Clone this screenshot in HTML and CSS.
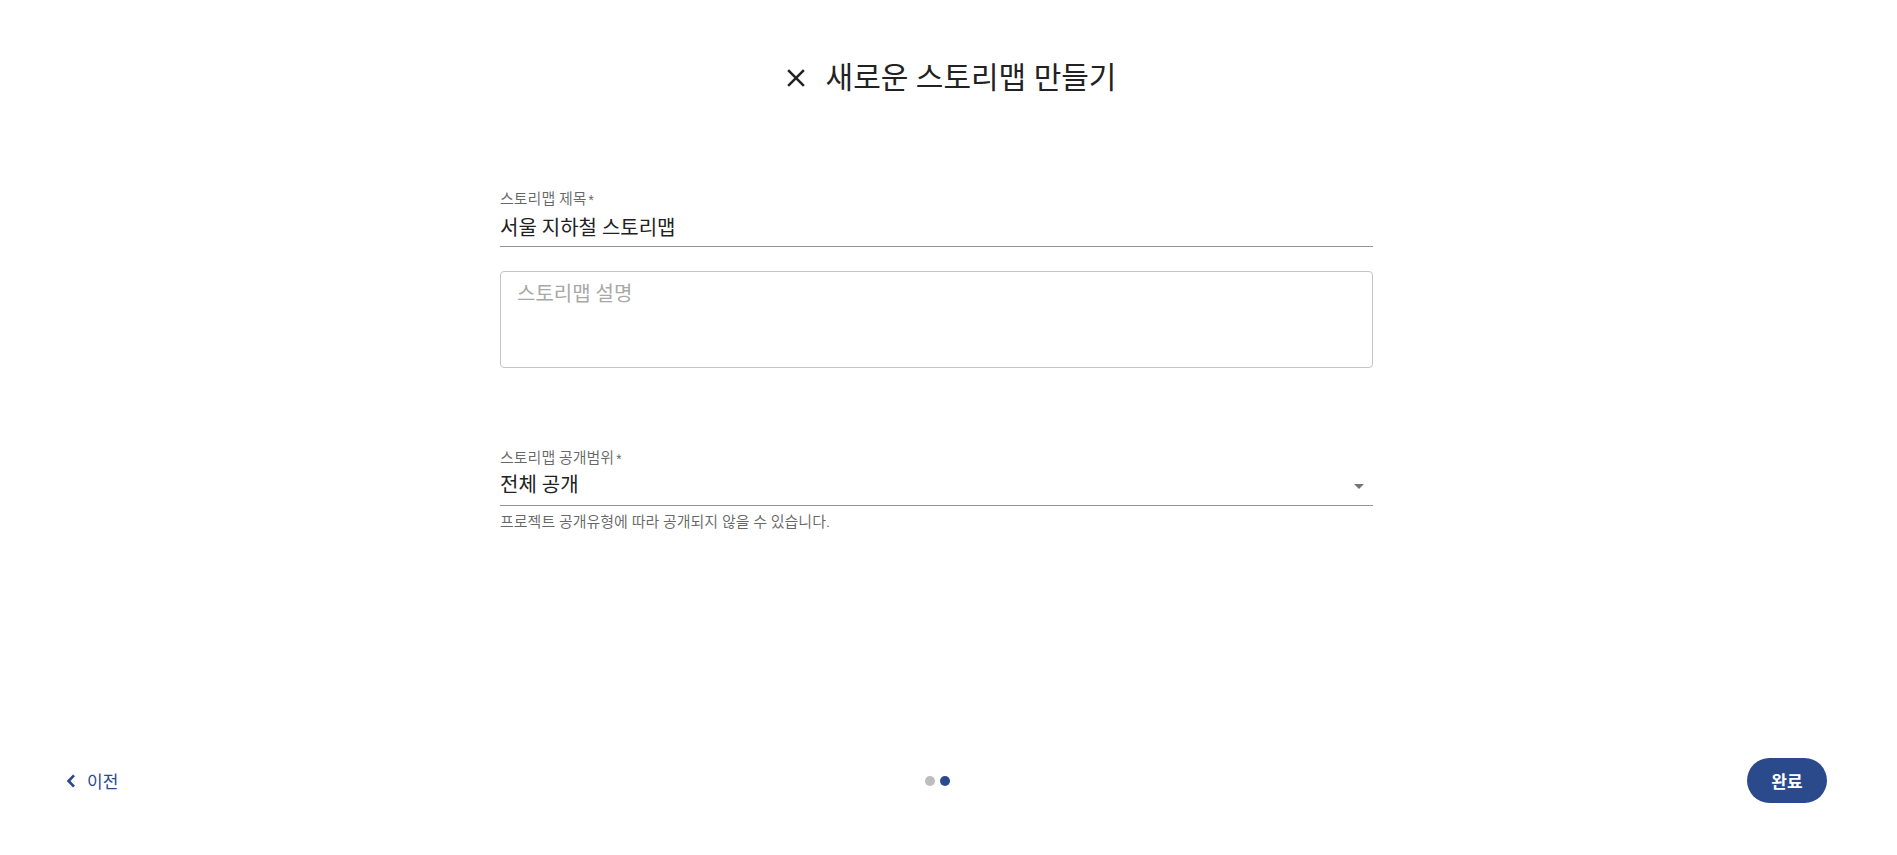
FILE: index.html
```html
<!DOCTYPE html>
<html>

<head>
    <meta name="viewport" content="width=device-width,initial-scale=1.0">
    <title>새로운 스토리맵 만들기</title>
    <link rel="stylesheet" href="styles.css">
</head>

<body>
    <div class="page">
        <header class="dialog-header">
            <button class="close-button" aria-label="닫기">
                <svg viewBox="0 0 24 24" width="30" height="30">
                    <path d="M19 6.41 17.59 5 12 10.59 6.41 5 5 6.41 10.59 12 5 17.59 6.41 19 12 13.41 17.59 19 19 17.59 13.41 12z" fill="currentColor" />
                </svg>
            </button>
            <h1 class="dialog-title">새로운 스토리맵 만들기</h1>
        </header>

        <main class="form-wrap">
            <form class="form">
                <div class="field">
                    <label class="field-label">스토리맵 제목<span class="required">*</span></label>
                    <div class="field-input">서울 지하철 스토리맵</div>
                </div>

                <div class="textarea-box">
                    <div class="placeholder">스토리맵 설명</div>
                </div>

                <div class="field field-select">
                    <label class="field-label">스토리맵 공개범위<span class="required">*</span></label>
                    <div class="field-input select-input">
                        <span class="select-value">전체 공개</span>
                        <svg class="select-arrow" viewBox="0 0 24 24" width="24" height="24">
                            <path d="M7 10l5 5 5-5z" fill="currentColor" />
                        </svg>
                    </div>
                    <p class="helper-text">프로젝트 공개유형에 따라 공개되지 않을 수 있습니다.</p>
                </div>
            </form>
        </main>

        <footer class="stepper">
            <button class="back-button">
                <svg viewBox="0 0 10 14" width="10" height="14">
                    <polyline points="8,1.4 2.6,7 8,12.6" fill="none" stroke="currentColor" stroke-width="2.7" />
                </svg>
                <span>이전</span>
            </button>
            <div class="dots">
                <span class="dot"></span>
                <span class="dot active"></span>
            </div>
            <button class="done-button">완료</button>
        </footer>
    </div>
</body>

</html>
```

FILE: styles.css
```css
body {
    margin: 0;
    padding: 0;
    font-family: Roboto, "Noto Sans CJK KR", sans-serif;
    background: #fff;
    color: #212121;
}

button {
    font-family: inherit;
    background: none;
    border: none;
    cursor: pointer;
    padding: 0;
}

.page {
    display: flex;
    flex-direction: column;
    min-height: 100vh;
}

.dialog-header {
    display: flex;
    justify-content: center;
    align-items: center;
    gap: 15px;
    padding-top: 60px;
}

.close-button {
    display: flex;
    color: #222;
}

.dialog-title {
    margin: 0;
    font-size: 30px;
    font-weight: 400;
    line-height: 36px;
    color: #222;
}

.form-wrap {
    display: flex;
    justify-content: center;
    padding-top: 93px;
}

.form {
    width: 873px;
    margin-right: 24px;
    display: flex;
    flex-direction: column;
}

.field-label {
    display: block;
    font-size: 15px;
    line-height: 20px;
    color: rgba(0, 0, 0, 0.6);
}

.required {
    margin-left: 2px;
    font-size: 12px;
}

.field-input {
    margin-top: 4px;
    font-size: 20px;
    line-height: 28px;
    padding-bottom: 4px;
    border-bottom: 1px solid rgba(0, 0, 0, 0.42);
}

.textarea-box {
    margin-top: 24px;
    border: 1px solid #c4c4c4;
    border-radius: 4px;
    padding: 8px 16px;
    height: 79px;
}

.placeholder {
    font-size: 20px;
    line-height: 28px;
    color: #a8a8a8;
}

.field-select {
    margin-top: 80px;
}

.select-input {
    display: flex;
    align-items: center;
    margin-top: 2px;
    padding-bottom: 6px;
}

.select-value {
    flex-grow: 1;
}

.select-arrow {
    color: #757575;
    margin-right: 2px;
    margin-top: 2px;
}

.helper-text {
    margin: 6px 0 0;
    font-size: 15px;
    line-height: 20px;
    color: rgba(0, 0, 0, 0.6);
}

.stepper {
    margin-top: auto;
    display: flex;
    justify-content: space-between;
    align-items: center;
    padding: 0 70px 52px 58px;
}

.back-button {
    display: flex;
    align-items: center;
    gap: 11px;
    padding: 6px 10px 6px 8px;
    color: #2b4a8b;
    font-size: 17px;
    font-weight: 400;
}

.dots {
    display: flex;
    gap: 5px;
}

.dot {
    width: 10px;
    height: 10px;
    border-radius: 50%;
    background: #bdbdbd;
}

.dot.active {
    background: #2b4a8b;
}

.done-button {
    width: 80px;
    height: 45px;
    border-radius: 23px;
    background: #2b4a8b;
    color: #fff;
    font-size: 17px;
    font-weight: 700;
}
```
